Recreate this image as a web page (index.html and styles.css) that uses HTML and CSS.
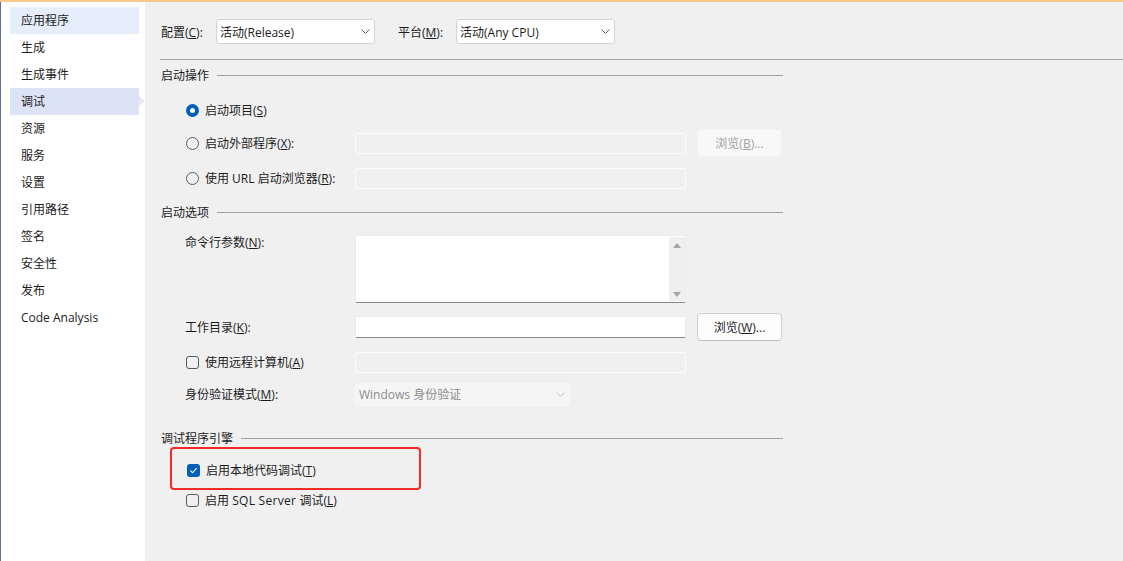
FILE: index.html
```html
<!DOCTYPE html>
<html lang="zh-CN">
<head>
<meta charset="utf-8">
<title>调试</title>
<link rel="stylesheet" href="styles.css">
</head>
<body>
<div class="topbar"></div>
<div class="app">
  <nav class="sidebar">
    <div class="nav-item hover">应用程序</div>
    <div class="nav-item">生成</div>
    <div class="nav-item">生成事件</div>
    <div class="nav-item active">调试</div>
    <div class="nav-item">资源</div>
    <div class="nav-item">服务</div>
    <div class="nav-item">设置</div>
    <div class="nav-item">引用路径</div>
    <div class="nav-item">签名</div>
    <div class="nav-item">安全性</div>
    <div class="nav-item">发布</div>
    <div class="nav-item">Code Analysis</div>
  </nav>
  <main class="main">
    <div class="config-row">
      <span class="cfg-label">配置(<u>C</u>):</span>
      <div class="select"><span>活动(Release)</span><svg class="chev" viewBox="0 0 9 5" width="9" height="5"><path d="M0.5 0.5 L4.5 4.5 L8.5 0.5" fill="none" stroke="#5f5f5f" stroke-width="1"/></svg></div>
      <span class="cfg-label plat">平台(<u>M</u>):</span>
      <div class="select"><span>活动(Any CPU)</span><svg class="chev" viewBox="0 0 9 5" width="9" height="5"><path d="M0.5 0.5 L4.5 4.5 L8.5 0.5" fill="none" stroke="#5f5f5f" stroke-width="1"/></svg></div>
    </div>
    <div class="rule"></div>

    <div class="group-head h1"><span>启动操作</span><i></i></div>

    <div class="row r-start">
      <div class="lead"><span class="radio on"></span><span>启动项目(<u>S</u>)</span></div>
    </div>
    <div class="row r-ext">
      <div class="lead"><span class="radio"></span><span>启动外部程序(<u>X</u>):</span></div>
      <div class="field disabled"></div>
      <div class="btn disabled">浏览(<u>B</u>)...</div>
    </div>
    <div class="row r-url">
      <div class="lead"><span class="radio"></span><span>使用 URL 启动浏览器(<u>R</u>):</span></div>
      <div class="field disabled"></div>
    </div>

    <div class="group-head h2"><span>启动选项</span><i></i></div>

    <div class="row r-args">
      <div class="lead top">命令行参数(<u>N</u>):</div>
      <div class="textarea">
        <div class="scroll">
          <span class="tri up"></span>
          <span class="tri down"></span>
        </div>
      </div>
    </div>
    <div class="row r-dir">
      <div class="lead">工作目录(<u>K</u>):</div>
      <div class="field input"></div>
      <div class="btn">浏览(<u>W</u>)...</div>
    </div>
    <div class="row r-remote">
      <div class="lead"><span class="check"></span><span>使用远程计算机(<u>A</u>)</span></div>
      <div class="field disabled"></div>
    </div>
    <div class="row r-auth">
      <div class="lead">身份验证模式(<u>M</u>):</div>
      <div class="select dis-select"><span>Windows 身份验证</span><svg class="chev" viewBox="0 0 9 5" width="9" height="5"><path d="M0.5 0.5 L4.5 4.5 L8.5 0.5" fill="none" stroke="#c4c4c4" stroke-width="1"/></svg></div>
    </div>

    <div class="group-head h3"><span>调试程序引擎</span><i></i></div>

    <div class="highlight">
      <div class="row r-native">
        <div class="lead"><span class="check on"><svg viewBox="0 0 13 13" width="13" height="13"><path d="M3.6 6.8 L5.6 8.7 L9.4 4.4" fill="none" stroke="#ffffff" stroke-width="1.1" stroke-linecap="round" stroke-linejoin="round"/></svg></span><span>启用本地代码调试(<u>T</u>)</span></div>
      </div>
    </div>
    <div class="row r-sql">
      <div class="lead"><span class="check"></span><span>启用 <span class="lat">SQL Server</span> 调试(<u>L</u>)</span></div>
    </div>
  </main>
</div>
</body>
</html>
```

FILE: styles.css
```css
* { box-sizing: border-box; }
html, body {
  margin: 0;
  padding: 0;
  height: 100%;
  overflow: hidden;
}
body {
  font-family: "Open Sans", "Noto Sans CJK SC", sans-serif;
  font-size: 12px;
  color: #1b1b1b;
  background: #f0f0f0;
}
u { text-decoration: underline; text-underline-offset: 1px; }
.lat { letter-spacing: 0.3px; }

.topbar {
  height: 2px;
  background: #f8c98a;
}
.app {
  display: flex;
  height: 559px;
}

/* sidebar */
.sidebar {
  width: 145px;
  flex: none;
  background: #ffffff;
  border-left: 1px solid #5d6d9f;
  padding-top: 5px;
}
.nav-item {
  position: relative;
  height: 27px;
  line-height: 27px;
  margin: 0 6px 0 9px;
  padding-left: 11px;
  white-space: nowrap;
}
.nav-item.hover { background: #e6eefc; }
.nav-item.active { background: #dce3f7; }
.nav-item.active::after {
  content: "";
  position: absolute;
  right: -6px;
  top: 8px;
  border-left: 6px solid #e6eaf8;
  border-top: 5px solid transparent;
  border-bottom: 5px solid transparent;
}

/* main */
.main {
  flex: 1;
  padding: 17px 0 0 16px;
  background: #f0f0f0;
}
.config-row {
  display: flex;
  align-items: center;
  height: 25px;
}
.cfg-label { width: 55px; }
.cfg-label.plat { width: 58px; margin-left: 23px; }
.select {
  width: 159px;
  height: 25px;
  background: #ffffff;
  border: 1px solid #d3d3d3;
  border-radius: 3px;
  display: flex;
  align-items: center;
  justify-content: space-between;
  padding: 0 4px 0 3px;
}

.rule {
  height: 1px;
  background: #a0a0a0;
  margin: 15px 0 0 -1px;
}

.group-head {
  width: 622px;
  height: 16px;
  display: flex;
  align-items: center;
}
.group-head i {
  flex: 1;
  height: 1px;
  background: #a0a0a0;
  margin-left: 8px;
}
.h1 { margin-top: 7px; }
.h2 { margin-top: 12px; }
.h3 { margin-top: 22px; }

.row {
  display: flex;
  align-items: center;
  height: 28px;
  padding-left: 24px;
}
.lead {
  width: 170px;
  flex: none;
  display: flex;
  align-items: center;
  white-space: nowrap;
}
.lead.top { align-self: flex-start; line-height: 16px; }

.r-start { margin-top: 13px; }
.r-ext { margin-top: 5px; }
.r-url { margin-top: 7px; }
.r-args { margin-top: 15px; height: 68px; align-items: flex-start; }
.r-dir { margin-top: 10px; }
.r-remote { margin-top: 7px; }
.r-auth { margin-top: 4px; }
.r-native { height: 18px; padding-left: 14px; }
.r-sql { margin-top: 1px; height: 18px; }

.radio {
  width: 13px;
  height: 13px;
  border-radius: 50%;
  border: 1px solid #5b5b5b;
  margin: 0 6px 0 1px;
  flex: none;
}
.radio.on {
  border: 4px solid #005fb8;
  background: #ffffff;
}
.check {
  width: 13px;
  height: 13px;
  border-radius: 3px;
  border: 1px solid #5b5b5b;
  margin: 0 6px 0 1px;
  flex: none;
  display: flex;
}
.check.on {
  border: none;
  background: #005fb8;
}

.field {
  width: 331px;
  height: 21px;
  border-radius: 2px;
}
.field.disabled {
  background: #f0f0f0;
  border: 1px solid #fbfbfb;
}
.field.input {
  height: 22px;
  background: #ffffff;
  border: 1px solid #ececec;
  border-bottom-color: #868686;
}
.textarea {
  width: 331px;
  height: 68px;
  background: #ffffff;
  border: 1px solid #ececec;
  border-bottom-color: #868686;
  border-radius: 2px;
  display: flex;
  justify-content: flex-end;
  padding: 1px 0;
}
.scroll {
  width: 16px;
  background: #efefef;
  display: flex;
  flex-direction: column;
  justify-content: space-between;
  align-items: center;
  padding: 6px 0 4px;
}
.tri {
  width: 0;
  height: 0;
  border-left: 4px solid transparent;
  border-right: 4px solid transparent;
}
.tri.up { border-bottom: 5px solid #a6a6a6; }
.tri.down { border-top: 5px solid #a6a6a6; }

.btn {
  width: 85px;
  height: 28px;
  margin-left: 11px;
  border-radius: 4px;
  background: #fdfdfd;
  border: 1px solid #d0d0d0;
  border-bottom-color: #bdbdbd;
  display: flex;
  align-items: center;
  justify-content: center;
}
.btn.disabled {
  background: #f8f8f8;
  border-color: #f2f2f2;
  color: #a2a2a2;
}

.dis-select {
  width: 215px;
  height: 23px;
  background: #f5f5f5;
  border-color: #f7f7f7;
  color: #8d8d8d;
}

.highlight {
  width: 251px;
  height: 43px;
  margin: 1px 0 0 9px;
  border: 2px solid #f52a24;
  border-radius: 4px;
  padding-top: 12px;
}
```
